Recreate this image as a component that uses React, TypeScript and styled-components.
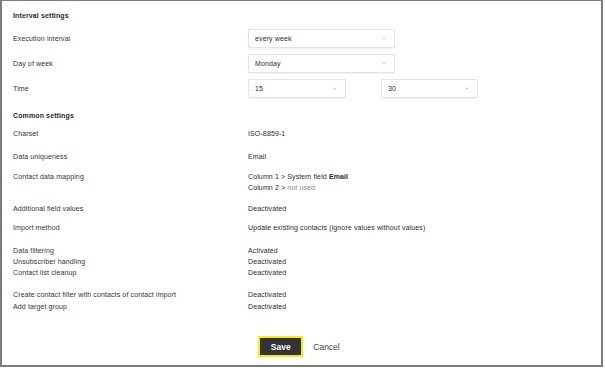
import styled, { createGlobalStyle } from "styled-components";

const GlobalStyle = createGlobalStyle`
  html, body {
    margin: 0;
    padding: 0;
    background: #ffffff;
  }
  body {
    font-family: "Liberation Sans", Arial, sans-serif;
    color: #333333;
  }
`;

const Frame = styled.div`
  box-sizing: border-box;
  width: 603px;
  height: 367px;
  border: 2px solid #7c7c7c;
  border-top-width: 1px;
  padding-left: 11px;
  font-size: 7px;
  line-height: 11px;
  letter-spacing: 0.12px;
`;

const Heading = styled.div<{ $top: number }>`
  margin-top: ${(p) => p.$top}px;
  font-weight: bold;
  color: #2b2b2b;
`;

const Row = styled.div<{ $top: number; $h?: number }>`
  display: grid;
  grid-template-columns: 235px 1fr;
  align-items: center;
  margin-top: ${(p) => p.$top}px;
  min-height: ${(p) => p.$h ?? 11}px;
`;

const Label = styled.div`
  color: #333333;
  align-self: start;
`;

const CenteredLabel = styled(Label)`
  align-self: center;
`;

const Value = styled.div`
  color: #2b2b2b;
`;

const Muted = styled.span`
  color: #8a8a8a;
`;

const Strong = styled.span`
  font-weight: bold;
`;

const SelectPair = styled.div`
  display: flex;
  gap: 35px;
`;

const Select = styled.div<{ $w: number }>`
  box-sizing: border-box;
  width: ${(p) => p.$w}px;
  height: 19px;
  display: flex;
  align-items: center;
  justify-content: space-between;
  padding: 0 8px 0 6px;
  border: 1px solid #e3e3e3;
  border-radius: 1px;
  box-shadow: 0 1px 1px rgba(0, 0, 0, 0.05);
  color: #2b2b2b;
`;

const Chevron = () => (
  <svg width="4" height="3" viewBox="0 0 4 3">
    <path d="M0.5 0.8 L2 2.2 L3.5 0.8" fill="none" stroke="#a8a8a8" strokeWidth="0.7" />
  </svg>
);

const Actions = styled.div`
  display: flex;
  justify-content: center;
  align-items: center;
  gap: 10px;
  margin-top: 24px;
  padding-right: 16px;
`;

const SaveButton = styled.button`
  box-sizing: border-box;
  width: 45px;
  height: 21px;
  border: 2px solid #f5f000;
  background: #333333;
  color: #ffffff;
  font-family: "Liberation Sans", Arial, sans-serif;
  font-weight: bold;
  font-size: 8.5px;
  padding: 0;
`;

const CancelButton = styled.button`
  border: none;
  background: none;
  padding: 0;
  font-family: "Liberation Sans", Arial, sans-serif;
  font-size: 8.5px;
  color: #444444;
`;

interface IInfo {
  label: string;
  value: React.ReactNode;
  top: number;
}

const common: IInfo[] = [
  { label: "Charset", value: "ISO-8859-1", top: 7 },
  { label: "Data uniqueness", value: "Email", top: 12 },
  {
    label: "Contact data mapping",
    value: (
      <>
        Column 1 &gt; System field <Strong>Email</Strong>
        <br />
        Column 2 &gt; <Muted>not used</Muted>
      </>
    ),
    top: 9,
  },
  { label: "Additional field values", value: "Deactivated", top: 10 },
  { label: "Import method", value: "Update existing contacts (ignore values without values)", top: 8 },
  { label: "Data filtering", value: "Activated", top: 12 },
  { label: "Unsubscriber handling", value: "Deactivated", top: 0 },
  { label: "Contact list cleanup", value: "Deactivated", top: 0 },
  { label: "Create contact filter with contacts of contact import", value: "Deactivated", top: 11 },
  { label: "Add target group", value: "Deactivated", top: 1 },
];

function App() {
  return (
    <>
      <GlobalStyle />
      <Frame>
        <Heading $top={9}>Interval settings</Heading>
        <Row $top={8} $h={19}>
          <CenteredLabel>Execution interval</CenteredLabel>
          <Select $w={147}>
            every week <Chevron />
          </Select>
        </Row>
        <Row $top={6} $h={19}>
          <CenteredLabel>Day of week</CenteredLabel>
          <Select $w={147}>
            Monday <Chevron />
          </Select>
        </Row>
        <Row $top={6} $h={19}>
          <CenteredLabel>Time</CenteredLabel>
          <SelectPair>
            <Select $w={98}>
              15 <Chevron />
            </Select>
            <Select $w={97}>
              30 <Chevron />
            </Select>
          </SelectPair>
        </Row>

        <Heading $top={12}>Common settings</Heading>
        {common.map((item) => (
          <Row key={item.label} $top={item.top}>
            <Label>{item.label}</Label>
            <Value>{item.value}</Value>
          </Row>
        ))}

        <Actions>
          <SaveButton>Save</SaveButton>
          <CancelButton>Cancel</CancelButton>
        </Actions>
      </Frame>
    </>
  );
}

export default App;
